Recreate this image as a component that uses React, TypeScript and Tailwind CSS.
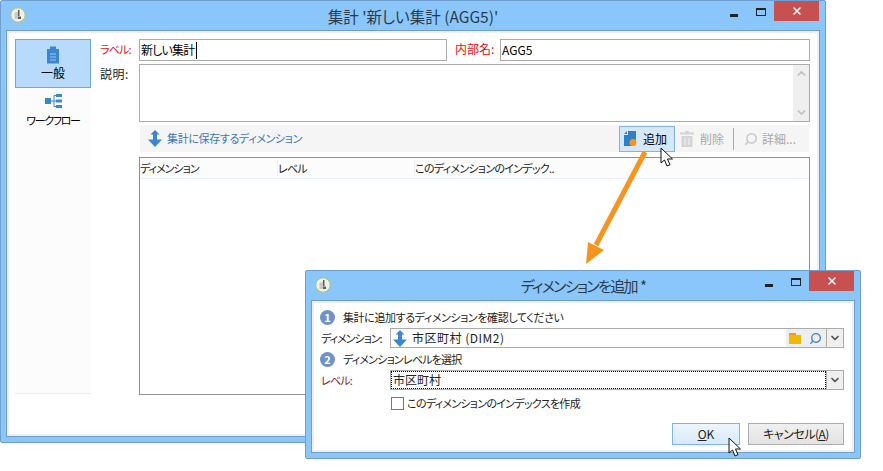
import { ChevronDown, ChevronUp, Search, X } from "lucide-react";

const font = "[font-family:'Noto_Sans_CJK_JP','Liberation_Sans',sans-serif] [font-feature-settings:'palt'] whitespace-nowrap";

function AppIcon() {
  return (
    <svg width="16" height="16" viewBox="0 0 16 16" className="shrink-0">
      <circle cx="8" cy="8" r="7.2" fill="#f1f1ea" stroke="#a8c66c" strokeWidth="1" />
      <path d="M4.500 6 8 4.500V12H4.500z" fill="#c9c9c4" />
      <path d="M8 3h1.500v6H8zM8 9.500h3V12H8z" fill="#5f5f5f" />
    </svg>
  );
}

function TitleBar({ title, titleClass }: { title: string; titleClass: string }) {
  return (
    <div className="flex h-[30px] shrink-0 items-start">
      <div className="ml-[9px] mt-[6px]">
        <AppIcon />
      </div>
      <div className={`flex-1 pl-[70px] pt-[5px] text-center leading-[20px] text-[#2b3a4a] ${titleClass}`}>{title}</div>
      <div className="mt-[13px] h-[3px] w-[8px] bg-[#222]" />
      <div className="ml-[18px] mt-[7px] h-[8px] w-[10px] border border-t-2 border-[#222]" />
      <div className="ml-[8px] mr-[6px] flex h-[20px] w-[45px] items-center justify-center bg-[#c75050]">
        <X size={12} strokeWidth={3} color="#fff" />
      </div>
    </div>
  );
}

function DimensionIcon() {
  return (
    <svg width="14" height="17" viewBox="0 0 14 17" className="shrink-0">
      <path d="M7 0 11.500 4.500H9V9.500H14L7 17 0 9.500H5V4.500H2.500z" fill="#3b86cf" />
    </svg>
  );
}

function Step({ n, text, textClass }: { n: number; text: string; textClass: string }) {
  return (
    <div className="flex h-[20px] items-center gap-[8px] pl-[6px]">
      <div className="flex size-[15px] items-center justify-center rounded-full bg-[#6f93c4] text-[11px] font-bold leading-none text-white">
        {n}
      </div>
      <span className={`text-[11px] text-[#222] ${textClass}`}>{text}</span>
    </div>
  );
}

export default function App() {
  return (
    <div className={`relative h-[471px] w-[883px] overflow-hidden bg-white ${font}`}>
      {/* main window */}
      <div className="absolute left-0 top-0 flex h-[443px] w-[826px] flex-col rounded-[2px] border border-[#6f9fcf] bg-[#8bc6fa]">
        <TitleBar title="集計 '新しい集計 (AGG5)'" titleClass="text-[15.5px]" />
        <div className="mx-[6px] mb-[6px] flex flex-1 gap-[8px] border-2 border-[#efefef] bg-white pl-[6px] pr-[6px] pt-[6px] outline outline-[#6f9fcf]">
          <div className="flex h-[355px] w-[76px] shrink-0 flex-col border-b border-[#e6effb] bg-[#fcfcfc]">
            <div className="flex h-[49px] flex-col items-center border border-[#6ea6e2] bg-[#b9dbfb] pt-[6px]">
              <svg width="14" height="18" viewBox="0 0 14 18">
                <path d="M1 3h3V0.500h6V3h3v14.500H1z" fill="#3b86cf" />
                <path d="M4 8h6M4 11h6M4 14h6" stroke="#9cc8ef" strokeWidth="1" />
              </svg>
              <span className="mt-[1px] text-[12px] leading-[16px] text-black">一般</span>
            </div>
            <div className="flex flex-col items-center pt-[6px]">
              <svg width="17" height="15" viewBox="0 0 17 15">
                <path d="M0 4h6v6H0zM11 0h6v3h-6zM11 5.500h6v3h-6zM11 11h6v3h-6z" fill="#3b86cf" />
                <path d="M6 7h3M9 1.500v11M9 1.500h2M9 7h2M9 12.500h2" stroke="#3b86cf" fill="none" />
              </svg>
              <span className="mt-[3px] text-[11px] leading-[16px] tracking-[-1.300px] text-black">ワークフロー</span>
            </div>
          </div>
          <div className="flex w-[711px] flex-col">
            <div className="flex h-[22px]">
              <span className="w-[40px] shrink-0 pl-px text-[11px] leading-[20px] tracking-[-0.800px] text-[#e01010]">ラベル:</span>
              <div className="flex w-[308px] items-center border border-[#ababab] pl-[1px] text-[12px] tracking-[-0.800px] text-black">
                新しい集計<span className="ml-[2px] h-[17px] w-px bg-black" />
              </div>
              <span className="w-[53px] shrink-0 pl-[8px] text-[12px] leading-[20px] text-[#e01010]">内部名:</span>
              <div className="flex flex-1 items-center border border-[#ababab] pl-[1px] text-[12px] text-black">AGG5</div>
            </div>
            <div className="mt-[3px] flex h-[58px]">
              <span className="w-[40px] shrink-0 pl-px text-[12px] leading-[20px] tracking-[0.500px] text-[#222]">説明:</span>
              <div className="flex flex-1 justify-end border border-[#ababab]">
                <div className="flex w-[16px] flex-col items-center justify-between bg-[#efefef] py-[2px] text-[#c4c4c4]">
                  <ChevronUp size={13} strokeWidth={3} />
                  <ChevronDown size={13} strokeWidth={3} />
                </div>
              </div>
            </div>
            <div className="ml-[41px] mr-px mt-[3px] flex h-[27px] items-center bg-[#f5f5f5] pl-[8px] text-[12px]">
              <DimensionIcon />
              <span className="ml-[5px] flex-1 text-[11px] tracking-[-0.350px] text-[#3a78b8]">集計に保存するディメンション</span>
              <div className="flex h-[26px] w-[56px] items-center border border-[#7db4ea] bg-[#d5e8fa] pl-[4px]">
                <svg width="14" height="16" viewBox="0 0 14 16">
                  <path d="M0 3 3 0v3zM4 0h8v9H8v6H0V4h4z" fill="#2f7fc6" />
                  <circle cx="9" cy="11.500" r="3.500" fill="#f7941e" />
                </svg>
                <span className="ml-[5px] text-black">追加</span>
              </div>
              <svg width="14" height="16" viewBox="0 0 14 16" className="ml-[5px]">
                <path d="M5 0h4v1.500h5V3.500H0V1.500h5zM1.500 5h11v11h-11z" fill="#d4d4d4" />
                <path d="M5 7v7M9 7v7" stroke="#f5f5f5" strokeWidth="1" />
              </svg>
              <span className="ml-[6px] text-[#a8a8a8]">削除</span>
              <div className="ml-[9px] h-[22px] w-px bg-[#aaa]" />
              <Search size={14} strokeWidth={2.500} className="ml-[10px] -scale-x-100 text-[#c8c8c8]" />
              <span className="ml-[4px] mr-[13px] text-[#a8a8a8]">詳細...</span>
            </div>
            <div className="ml-[40px] mt-[5px] h-[238px] border border-[#8f8f94]">
              <div className="flex h-[21px] items-center border-b border-[#e6effb] bg-[#fcfcfc] text-[11px] text-[#222]">
                <span className="w-[138px] border-r border-[#f0f0f0] tracking-[-1px]">ディメンション</span>
                <span className="w-[137px] border-r border-[#f0f0f0] tracking-[-0.800px]">レベル</span>
                <span className="w-[150px] tracking-[-0.700px]">このディメンションのインデック..</span>
              </div>
            </div>
          </div>
        </div>
      </div>

      {/* dialog */}
      <div className="absolute left-[305px] top-[270px] flex h-[189px] w-[556px] flex-col rounded-[2px] border border-[#6f9fcf] bg-[#8bc6fa]">
        <TitleBar title={"ディメンションを追加\u00a0\u00a0*"} titleClass="text-[15px] tracking-[-1.700px]" />
        <div className="mx-[6px] mb-[6px] flex flex-1 flex-col border-2 border-[#efefef] bg-white pt-[4px] outline outline-[#6f9fcf]">
          <Step n={1} text="集計に追加するディメンションを確認してください" textClass="tracking-[-0.400px]" />
          <div className="mt-px flex h-[20px] items-center pl-[7px]">
            <span className="w-[69px] shrink-0 text-[11px] tracking-[-1px] text-[#222]">ディメンション:</span>
            <div className="flex h-[20px] w-[454px] items-center border border-[#ababab] pl-[2px] text-[12px] text-[#222]">
              <DimensionIcon />
              <span className="ml-[5px] flex-1 tracking-[0.500px]">市区町村 (DIM2)</span>
              <div className="flex h-full w-[40px] items-center gap-[7px] bg-[#eeeeee] pl-[3px]">
                <svg width="13" height="11" viewBox="0 0 13 11">
                  <path d="M0 0h7v2H0z" fill="#f7941e" />
                  <path d="M0 2h12v9H0z" fill="#f0ba00" />
                </svg>
                <Search size={13} strokeWidth={2.500} className="-scale-x-100 text-[#3b86cf]" />
              </div>
              <div className="flex h-full w-[17px] items-center justify-center border-l border-[#ababab] bg-[#efefef] text-[#555]">
                <ChevronDown size={12} strokeWidth={3.500} />
              </div>
            </div>
          </div>
          <div className="mt-px">
            <Step n={2} text="ディメンションレベルを選択" textClass="tracking-[-0.800px]" />
          </div>
          <div className="mt-px flex h-[20px] items-center pl-[7px]">
            <span className="w-[69px] shrink-0 text-[11px] tracking-[-0.800px] text-[#7a1f2b]">レベル:</span>
            <div className="flex h-[20px] w-[454px] items-center border border-[#ababab] text-[12px]">
              <div className="flex h-full flex-1 items-center border border-dotted border-black pl-px text-[#222]">市区町村</div>
              <div className="flex h-full w-[17px] items-center justify-center border-l border-[#ababab] bg-[#efefef] text-[#555]">
                <ChevronDown size={12} strokeWidth={3.500} />
              </div>
            </div>
          </div>
          <div className="mt-[6px] flex h-[14px] items-center gap-[3px] pl-[77px]">
            <div className="size-[13px] border border-[#777] bg-white" />
            <span className="text-[11px] tracking-[-0.700px] text-[#222]">このディメンションのインデックスを作成</span>
          </div>
          <div className="mr-[8px] mt-[13px] flex justify-end gap-[8px]">
            <div className="flex h-[22px] w-[68px] items-center justify-center border border-[#7db4ea] bg-gradient-to-b from-[#edf5fd] to-[#d8eafb] text-[12px] text-[#222]">
              <span className="underline">O</span>K
            </div>
            <div className="flex h-[22px] w-[96px] items-center justify-center border border-[#adadad] bg-gradient-to-b from-[#f0f0f0] to-[#e3e3e3] text-[12px] tracking-[-0.500px] text-[#222]">
              キャンセル(<span className="underline">A</span>)
            </div>
          </div>
        </div>
      </div>

      {/* arrow */}
      <svg width="883" height="471" viewBox="0 0 883 471" className="pointer-events-none absolute left-0 top-0">
        <path d="M645 152 596 245" stroke="#f7941e" strokeWidth="5" fill="none" />
        <path d="M586 264 588 242 604 250z" fill="#f7941e" />
      </svg>

      {/* cursors */}
      <svg width="14" height="20" viewBox="0 0 14 20" className="absolute left-[660px] top-[147px]">
        <path d="M1 1v15l3.500-3 2.500 6 3-1.300-2.500-5.700h5z" fill="#fff" stroke="#111" strokeWidth="1" />
      </svg>
      <svg width="14" height="20" viewBox="0 0 14 20" className="absolute left-[728px] top-[437px]">
        <path d="M1 1v15l3.500-3 2.500 6 3-1.300-2.500-5.700h5z" fill="#fff" stroke="#111" strokeWidth="1" />
      </svg>
    </div>
  );
}
